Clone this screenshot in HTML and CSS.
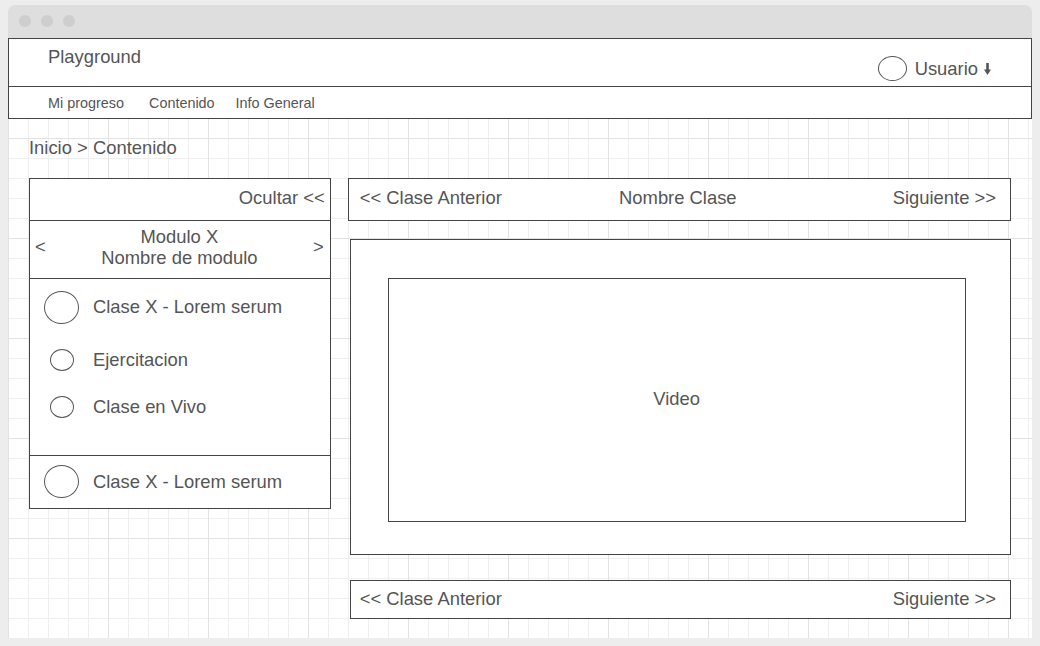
FILE: index.html
```html
<!DOCTYPE html>
<html lang="es">
<head>
<meta charset="utf-8">
<title>Playground</title>
<link rel="stylesheet" href="styles.css">
</head>
<body>
<div class="window">
  <div class="titlebar">
    <span class="dot"></span><span class="dot"></span><span class="dot"></span>
  </div>
  <div class="body">
    <header class="header">
      <div class="topbar">
        <div class="brand">Playground</div>
        <div class="user">
          <span class="avatar"></span>
          <span class="user-name">Usuario</span>
          <svg class="user-arrow" width="7" height="12" viewBox="0 0 7 12" aria-hidden="true"><rect x="2.2" y="0" width="2.6" height="7.5" fill="#555"/><polygon points="0,6.5 7,6.5 3.5,12" fill="#555"/></svg>
        </div>
      </div>
      <nav class="nav">
        <a class="nav-item">Mi progreso</a>
        <a class="nav-item">Contenido</a>
        <a class="nav-item">Info General</a>
      </nav>
    </header>
    <div class="content">
      <div class="breadcrumb">Inicio &gt; Contenido</div>
      <div class="main">
        <aside class="sidebar">
          <div class="side-head">Ocultar &lt;&lt;</div>
          <div class="module">
            <span class="module-arrow">&lt;</span>
            <div class="module-title"><div>Modulo X</div><div>Nombre de modulo</div></div>
            <span class="module-arrow">&gt;</span>
          </div>
          <div class="lessons">
            <div class="lesson lesson-main"><span class="icon-col"><span class="circle big"></span></span><span>Clase X - Lorem serum</span></div>
            <div class="lesson lesson-sub first"><span class="icon-col"><span class="circle small"></span></span><span>Ejercitacion</span></div>
            <div class="lesson lesson-sub second"><span class="icon-col"><span class="circle small"></span></span><span>Clase en Vivo</span></div>
          </div>
          <div class="lesson-next">
            <div class="lesson"><span class="icon-col"><span class="circle big"></span></span><span>Clase X - Lorem serum</span></div>
          </div>
        </aside>
        <section class="player">
          <div class="class-nav">
            <span class="prev">&lt;&lt; Clase Anterior</span>
            <span class="class-name">Nombre Clase</span>
            <span class="next">Siguiente &gt;&gt;</span>
          </div>
          <div class="video-frame">
            <div class="video">Video</div>
          </div>
          <div class="class-nav bottom">
            <span class="prev">&lt;&lt; Clase Anterior</span>
            <span class="next">Siguiente &gt;&gt;</span>
          </div>
        </section>
      </div>
    </div>
  </div>
</div>
</body>
</html>
```

FILE: styles.css
```css
* { box-sizing: border-box; }

html, body {
  margin: 0;
  padding: 0;
  background: #ededed;
}

body {
  font-family: "Liberation Sans", Arial, sans-serif;
  color: #555;
  font-size: 18.4px;
}

.window {
  margin: 5px 0 0 8px;
  width: 1024px;
  height: 633px;
  display: flex;
  flex-direction: column;
}

.titlebar {
  height: 33px;
  background: #dedede;
  border-radius: 7px 7px 0 0;
  display: flex;
  align-items: center;
  gap: 10px;
  padding-left: 11px;
  padding-bottom: 2px;
}

.dot {
  width: 12px;
  height: 12px;
  border-radius: 50%;
  background: #cecece;
}

.body {
  flex: 1;
  background-color: #fff;
  background-image:
    linear-gradient(to right, #e2e2e2 1px, transparent 1px),
    linear-gradient(to bottom, #e2e2e2 1px, transparent 1px),
    linear-gradient(to right, #efefef 1px, transparent 1px),
    linear-gradient(to bottom, #efefef 1px, transparent 1px);
  background-size: 100px 100px, 100px 100px, 20px 20px, 20px 20px;
  display: flex;
  flex-direction: column;
}

.header {
  background: #fff;
  border: 1px solid #444;
}

.topbar {
  height: 48px;
  border-bottom: 1px solid #444;
  display: flex;
  justify-content: space-between;
  padding: 0 40px 0 39px;
}

.brand {
  margin-top: 7px;
  line-height: 22px;
}

.user {
  align-self: flex-end;
  margin-bottom: 5px;
  display: flex;
  align-items: center;
}

.avatar {
  width: 29px;
  height: 25px;
  border: 1px solid #555;
  border-radius: 50%;
  margin-right: 8px;
}

.user-name { line-height: 22px; }

.user-arrow {
  margin-left: 6px;
  margin-top: 1px;
}

.nav {
  height: 31px;
  display: flex;
  align-items: center;
  padding-left: 39px;
  gap: 21px;
  font-size: 14.4px;
}

.nav-item { color: #555; }
.nav-item:first-child { margin-right: 4px; }

.content {
  padding: 0 21px;
}

.breadcrumb {
  margin-top: 18px;
  line-height: 22px;
}

.main {
  margin-top: 19px;
  display: flex;
  gap: 17px;
  align-items: flex-start;
}

.sidebar {
  width: 302px;
  border: 1px solid #444;
  background: #fff;
}

.side-head {
  height: 42px;
  border-bottom: 1px solid #444;
  display: flex;
  align-items: center;
  justify-content: flex-end;
  padding-right: 5px;
  padding-bottom: 3px;
}

.module {
  height: 58px;
  border-bottom: 1px solid #444;
  display: grid;
  grid-template-columns: 1fr auto 1fr;
  align-items: center;
  padding: 0 6px 5px 5px;
}

.module-arrow:last-child { justify-self: end; }

.module-title {
  text-align: center;
  line-height: 21px;
}

.lessons {
  height: 177px;
  border-bottom: 1px solid #444;
  padding: 11px 0 0 14px;
}

.lesson {
  display: flex;
  align-items: center;
}

.lesson-main { height: 34px; }
.lesson-sub { height: 24px; }
.lesson-sub.first { margin-top: 24px; }
.lesson-sub.second { margin-top: 23px; }

.icon-col {
  width: 35px;
  margin-right: 14px;
  display: flex;
  justify-content: center;
}

.circle {
  border: 1px solid #555;
  border-radius: 50%;
}

.circle.big { width: 35px; height: 33px; }
.circle.small { width: 24px; height: 22px; }

.lesson-next {
  height: 52px;
  display: flex;
  align-items: center;
  padding-left: 14px;
  padding-bottom: 1px;
}

.player {
  width: 664px;
  display: flex;
  flex-direction: column;
}

.class-nav {
  height: 43px;
  border: 1px solid #444;
  background: #fff;
  display: grid;
  grid-template-columns: 1fr auto 1fr;
  align-items: center;
  padding: 0 14px 4px 11px;
}

.class-nav .next { justify-self: end; }

.class-nav.bottom {
  margin: 25px 0 0 2px;
  height: 39px;
  grid-template-columns: 1fr 1fr;
  padding: 0 14px 2px 9px;
}

.video-frame {
  margin: 18px 0 0 2px;
  height: 316px;
  border: 1px solid #444;
  background: #fff;
  padding: 38px 0 0 37px;
}

.video {
  width: 578px;
  height: 244px;
  border: 1px solid #444;
  display: flex;
  align-items: center;
  justify-content: center;
  padding-bottom: 2px;
}
```
